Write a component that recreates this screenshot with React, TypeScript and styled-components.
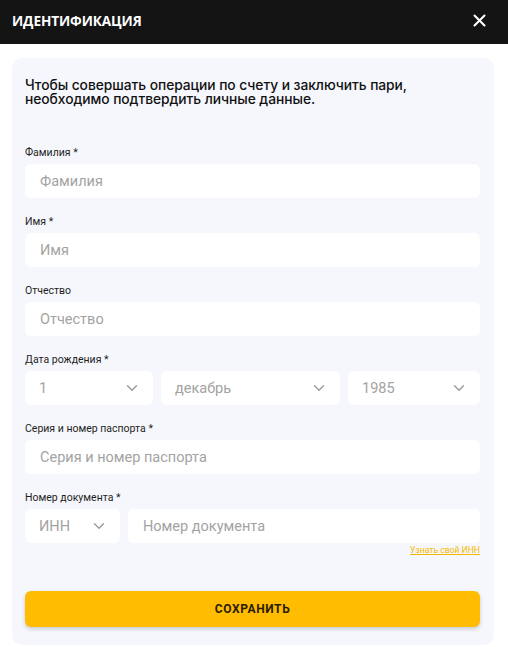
import React from "react";
import styled, { createGlobalStyle } from "styled-components";

const GlobalStyle = createGlobalStyle`
  html, body {
    margin: 0;
    padding: 0;
    background: #ffffff;
    font-family: Roboto, "Liberation Sans", sans-serif;
  }
  * { box-sizing: border-box; }
`;

const Chevron: React.FC = () => (
  <svg width="12" height="8" viewBox="0 0 12 8" fill="none">
    <path d="M1.5 1.8L6 6.2L10.5 1.8" stroke="#9a9a9a" strokeWidth="1.4" strokeLinecap="round" strokeLinejoin="round" />
  </svg>
);

const CloseIcon: React.FC = () => (
  <svg width="13" height="13" viewBox="0 0 13 13" fill="none">
    <path d="M1.5 1.5L11.5 11.5M11.5 1.5L1.5 11.5" stroke="#ffffff" strokeWidth="2.1" strokeLinecap="round" />
  </svg>
);

const App: React.FC = () => {
  return (
    <>
      <GlobalStyle />
      <Page>
        <Header>
          <HeaderTitle>ИДЕНТИФИКАЦИЯ</HeaderTitle>
          <CloseButton aria-label="Закрыть">
            <CloseIcon />
          </CloseButton>
        </Header>
        <Card>
          <Intro>
            Чтобы совершать операции по счету и заключить пари, необходимо подтвердить личные данные.
          </Intro>
          <Fields>
            <Field>
              <Label>Фамилия *</Label>
              <TextInput placeholder="Фамилия" />
            </Field>
            <Field>
              <Label>Имя *</Label>
              <TextInput placeholder="Имя" />
            </Field>
            <Field>
              <Label>Отчество</Label>
              <TextInput placeholder="Отчество" />
            </Field>
            <Field>
              <Label>Дата рождения *</Label>
              <DateRow>
                <SelectBox>
                  <span>1</span>
                  <Chevron />
                </SelectBox>
                <SelectBox>
                  <span>декабрь</span>
                  <Chevron />
                </SelectBox>
                <SelectBox>
                  <span>1985</span>
                  <Chevron />
                </SelectBox>
              </DateRow>
            </Field>
            <Field>
              <Label>Серия и номер паспорта *</Label>
              <TextInput placeholder="Серия и номер паспорта" />
            </Field>
            <Field>
              <Label>Номер документа *</Label>
              <DocRow>
                <SelectBox>
                  <span>ИНН</span>
                  <Chevron />
                </SelectBox>
                <TextInput placeholder="Номер документа" />
              </DocRow>
              <HelpLink href="#">Узнать свой ИНН</HelpLink>
            </Field>
          </Fields>
          <SaveButton>СОХРАНИТЬ</SaveButton>
        </Card>
      </Page>
    </>
  );
};

export default App;

const Page = styled.div`
  width: 508px;
  min-height: 647px;
  display: flex;
  flex-direction: column;
`;

const Header = styled.div`
  height: 44px;
  background: #141414;
  display: flex;
  align-items: center;
  justify-content: space-between;
  padding: 0 22px 0 12px;
`;

const HeaderTitle = styled.h1`
  margin: 0;
  color: #ffffff;
  font-family: "Open Sans", "Noto Sans", sans-serif;
  font-weight: 700;
  font-size: 13.6px;
  letter-spacing: -0.1px;
  padding-bottom: 3px;
`;

const CloseButton = styled.button`
  background: none;
  border: none;
  padding: 0;
  display: flex;
  cursor: pointer;
  margin-bottom: 3px;
`;

const Card = styled.div`
  margin: 14px 14px 0 12px;
  background: #f6f7fc;
  border-radius: 10px;
  padding: 20px 14px 18px 13px;
  display: flex;
  flex-direction: column;
`;

const Intro = styled.p`
  margin: 0 0 40px;
  font-family: Inter, Roboto, sans-serif;
  font-weight: 500;
  font-size: 13.8px;
  line-height: 14px;
  color: #111111;
  letter-spacing: -0.05px;
  padding-right: 60px;
`;

const Fields = styled.div`
  display: flex;
  flex-direction: column;
  gap: 17px;
`;

const Field = styled.div`
  display: flex;
  flex-direction: column;
`;

const Label = styled.label`
  font-size: 10.5px;
  line-height: 13px;
  color: #1e1e1e;
  margin-bottom: 5px;
`;

const TextInput = styled.input`
  height: 34px;
  width: 100%;
  border: none;
  border-radius: 6px;
  background: #ffffff;
  padding: 0 15px;
  font-family: Roboto, "Liberation Sans", sans-serif;
  font-size: 14.5px;
  color: #222;
  outline: none;

  &::placeholder {
    color: #a3a3a3;
  }
`;

const SelectBox = styled.div`
  height: 34px;
  border-radius: 6px;
  background: #ffffff;
  padding: 0 15px 0 14px;
  display: flex;
  align-items: center;
  justify-content: space-between;
  font-size: 14.5px;
  color: #a3a3a3;
  cursor: pointer;
`;

const DateRow = styled.div`
  display: grid;
  grid-template-columns: 128fr 179fr 132fr;
  gap: 8px;
`;

const DocRow = styled.div`
  display: grid;
  grid-template-columns: 95px 1fr;
  gap: 8px;
`;

const HelpLink = styled.a`
  align-self: flex-end;
  margin-top: 2px;
  font-size: 8.6px;
  line-height: 10px;
  color: #f5b800;
  text-decoration: underline;
`;

const SaveButton = styled.button`
  margin-top: 36px;
  height: 36px;
  border: none;
  border-radius: 6px;
  background: #ffbc00;
  box-shadow: 0 2px 4px rgba(0, 0, 0, 0.18);
  font-family: Roboto, "Liberation Sans", sans-serif;
  font-weight: 700;
  font-size: 12px;
  letter-spacing: 0.6px;
  color: #2a2000;
  cursor: pointer;
`;
